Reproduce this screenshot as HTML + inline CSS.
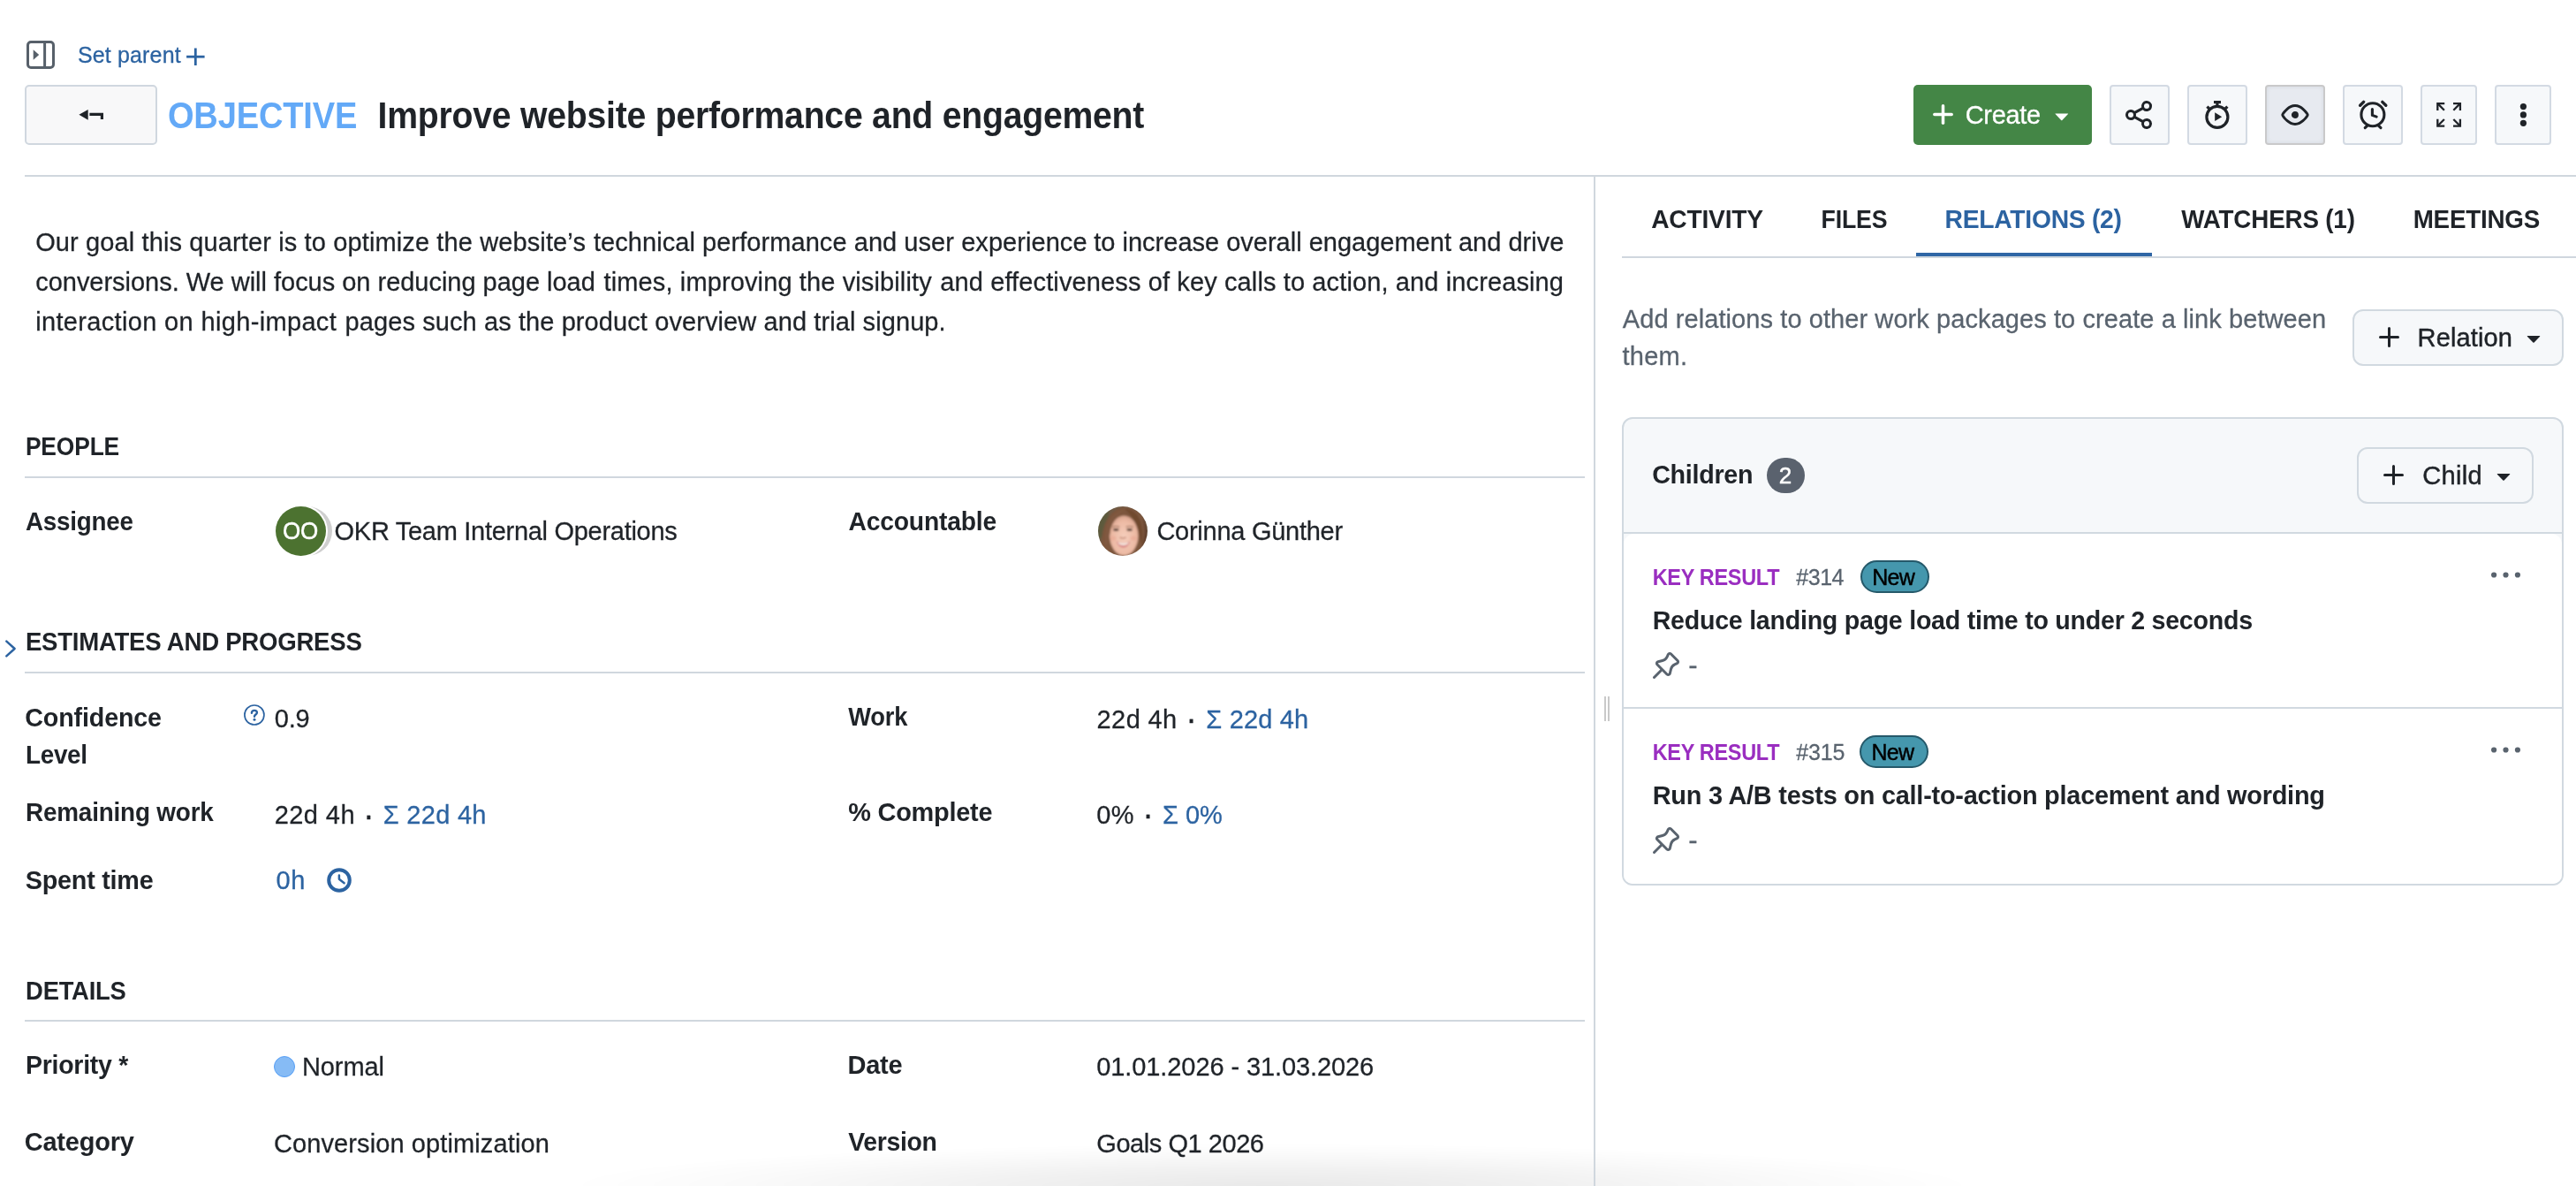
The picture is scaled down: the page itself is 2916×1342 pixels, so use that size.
<!DOCTYPE html><html lang="en"><head><meta charset="utf-8"><title>OBJECTIVE Improve website performance and engagement</title><style>
*{box-sizing:border-box;margin:0;padding:0}
html,body{width:2916px;height:1342px;overflow:hidden;background:#fff}
body{position:relative;font-family:"Liberation Sans",sans-serif;color:#1f2328}
.t{position:absolute;white-space:pre;line-height:1;font-weight:400;margin:0;-webkit-text-stroke:0.28px}
#app{position:absolute;left:0;top:0;width:2916px;height:1342px;will-change:transform}
.abs{position:absolute}
.hl{position:absolute;height:2px;background:#d0d7de}
.vl{position:absolute;width:2px;background:#d0d7de}
.btn{position:absolute;background:#f6f8fa;border:2px solid #d1d9e0;border-radius:12px}
.ibtn{position:absolute;top:96px;height:68px;background:#f6f8fa;border:2px solid #d3dae3;border-radius:4px}
svg{position:absolute;overflow:visible}
</style></head><body><div id="app">
<header>
<svg style="left:30px;top:46px" width="32" height="32" viewBox="0 0 32 32" fill="none" stroke="#57606a" stroke-width="3"><rect x="1.5" y="1.5" width="29" height="29" rx="3.5"/><line x1="20.6" y1="1.5" x2="20.6" y2="30.5"/><path d="M7.7 10.3 L14.2 16 L7.7 21.7 Z" fill="#57606a" stroke="none"/></svg>
<a class="t" style="left:88.0px;top:50px;font-size:25px;color:#2c63a1;letter-spacing:0.14px;">Set parent</a>
<svg style="left:211px;top:53.5px" width="21" height="21" viewBox="0 0 21 21" stroke="#2c63a1" stroke-width="2.8"><line x1="10.3" y1="0.5" x2="10.3" y2="20"/><line x1="0.1" y1="10.2" x2="20.6" y2="10.2"/></svg>
<div class="btn" style="left:28px;top:96px;width:150px;height:68px;background:#f8f8f9;border-color:#d0d7df;border-radius:5px"></div>
<svg style="left:89px;top:123px" width="29" height="14" viewBox="0 0 29 14" fill="#1f2328"><path d="M0.4 6.8 L10.7 0.9 L10.7 12.7 Z"/><path d="M12.4 4.8 H28 V11.9 H24.8 V8 H12.4 Z"/></svg>
<span class="t" style="left:189.9px;top:110.00px;font-size:38.1px;font-weight:700;-webkit-text-stroke:0;color:#63a9f7;letter-spacing:-0.17px;transform:scaleY(1.102);transform-origin:0 0;">OBJECTIVE</span>
<h1 class="t" style="left:427.6px;top:110.00px;font-size:39.2px;font-weight:700;-webkit-text-stroke:0;letter-spacing:-0.24px;transform:scaleY(1.071);transform-origin:0 0;">Improve website performance and engagement</h1>
<div class="abs" style="left:2166px;top:96px;width:202px;height:68px;background:#448646;border-radius:5px"></div>
<svg style="left:2188px;top:118px" width="23" height="23" viewBox="0 0 23 23" stroke="#fff" stroke-width="3.5" stroke-linecap="round"><line x1="11.5" y1="1.8" x2="11.5" y2="21.2"/><line x1="1.8" y1="11.6" x2="21.2" y2="11.6"/></svg>
<span class="t" style="left:2224.7px;top:116px;font-size:29px;color:#ffffff;letter-spacing:-0.32px;-webkit-text-stroke:0.3px #fff;">Create</span>
<svg style="left:2326px;top:127.7px" width="16" height="9" viewBox="0 0 16 9"><path d="M0.9 0.4 H14.7 Q15.6 0.4 15 1.1 L8.4 8 Q7.8 8.6 7.2 8 L0.6 1.1 Q0 0.4 0.9 0.4 Z" fill="#fff"/></svg>
<div class="ibtn" style="left:2388px;width:68px;background:#f6f8fa;border-color:#d3dae3"></div>
<div class="ibtn" style="left:2476px;width:68px;background:#f6f8fa;border-color:#d3dae3"></div>
<div class="ibtn" style="left:2564px;width:68px;background:#e7eaf0;box-shadow:inset 0 0 5px rgba(30,40,60,.09);border-color:#c9c9ca"></div>
<div class="ibtn" style="left:2652px;width:68px;background:#f6f8fa;border-color:#d3dae3"></div>
<div class="ibtn" style="left:2740px;width:64px;background:#f6f8fa;border-color:#d3dae3"></div>
<div class="ibtn" style="left:2824px;width:64px;background:#f6f8fa;border-color:#d3dae3"></div>
<svg style="left:2405.9px;top:114px" width="32" height="32" viewBox="0 0 16 16" fill="#1f2328"><path d="M15 3a3 3 0 0 1-5.175 2.066l-3.92 2.179a2.994 2.994 0 0 1 0 1.51l3.92 2.179a3 3 0 1 1-.73 1.31l-3.92-2.178a3 3 0 1 1 0-4.133l3.92-2.178A3 3 0 1 1 15 3Zm-1.5 10a1.5 1.5 0 1 0-3.001.001A1.5 1.5 0 0 0 13.5 13Zm-9-5a1.5 1.5 0 1 0-3.001.001A1.5 1.5 0 0 0 4.5 8Zm9-5a1.5 1.5 0 1 0-3.001.001A1.5 1.5 0 0 0 13.5 3Z"/></svg><svg style="left:2496px;top:113px" width="28" height="33" viewBox="0 0 28 33" fill="none" stroke="#1f2328" stroke-width="3.2" stroke-linecap="butt"><circle cx="13.9" cy="19.4" r="12"/><line x1="10" y1="2.6" x2="18" y2="2.6"/><line x1="13.9" y1="3" x2="13.9" y2="8"/><line x1="22" y1="11" x2="25.4" y2="7.6"/><line x1="5.8" y1="11" x2="2.4" y2="7.6"/><path d="M11.2 14.3 L19.2 19.2 L11.2 24 Z" fill="#1f2328" stroke="none"/></svg><svg style="left:2582px;top:114.1px" width="32" height="32" viewBox="0 0 16 16" fill="#1f2328"><path d="M8 2c1.981 0 3.671.992 4.933 2.078 1.27 1.091 2.187 2.345 2.637 3.023a1.62 1.62 0 0 1 0 1.798c-.45.678-1.367 1.932-2.637 3.023C11.67 13.008 9.981 14 8 14c-1.981 0-3.671-.992-4.933-2.078C1.797 10.83.88 9.576.43 8.898a1.62 1.62 0 0 1 0-1.798c.45-.677 1.367-1.931 2.637-3.022C4.33 2.992 6.019 2 8 2ZM1.679 7.932a.12.12 0 0 0 0 .136c.411.622 1.241 1.75 2.366 2.717C5.176 11.758 6.527 12.5 8 12.5c1.473 0 2.825-.742 3.955-1.715 1.124-.967 1.954-2.096 2.366-2.717a.12.12 0 0 0 0-.136c-.412-.621-1.242-1.75-2.366-2.717C10.824 4.242 9.473 3.5 8 3.5c-1.473 0-2.825.742-3.955 1.715-1.124.967-1.954 2.096-2.366 2.717ZM8 10a2 2 0 1 1-.001-3.999A2 2 0 0 1 8 10Z"/></svg><svg style="left:2670px;top:113px" width="32" height="33" viewBox="0 0 32 33" fill="none" stroke="#1f2328" stroke-width="3.1" stroke-linecap="round" stroke-linejoin="round"><circle cx="15.9" cy="16.7" r="13"/><path d="M15.4 10.6 V17.4 L20.2 19.1"/><line x1="1.6" y1="6.3" x2="5.6" y2="2.4" stroke-width="3.4"/><line x1="30.8" y1="6.3" x2="26.8" y2="2.4" stroke-width="3.4"/><line x1="9.6" y1="29.3" x2="7.2" y2="31.7"/><line x1="22.6" y1="29.3" x2="25" y2="31.7"/></svg>
<svg style="left:2757px;top:115px" width="30" height="30" viewBox="0 0 30 30" fill="none" stroke="#1f2328" stroke-width="2.3" stroke-linecap="butt" stroke-linejoin="miter"><path d="M2.3 10 V2.1 H10.2"/><path d="M2.6 2.4 L9.9 9.7"/><path d="M20 2.1 H27.9 V10"/><path d="M27.6 2.4 L20.3 9.7"/><path d="M2.3 19.7 V27.6 H10.2"/><path d="M2.6 27.3 L9.9 20"/><path d="M20 27.6 H27.9 V19.7"/><path d="M27.6 27.3 L20.3 20"/></svg>
<svg style="left:2852px;top:117.2px" width="9" height="27" viewBox="0 0 9 27" fill="#1f2328"><circle cx="4.4" cy="3.6" r="3.6"/><circle cx="4.4" cy="12.9" r="3.6"/><circle cx="4.4" cy="22.3" r="3.6"/></svg>

<div class="hl" style="left:28px;top:198px;width:2888px"></div>
</header>
<main>
<p><span class="t" style="left:40.2px;top:260px;font-size:29px;letter-spacing:0.12px;">Our goal this quarter is to optimize the website’s</span> <span class="t" style="left:672.0px;top:260px;font-size:29px;letter-spacing:0.06px;">technical performance and user experience</span> <span class="t" style="left:1238.3px;top:260px;font-size:29px;">to increase overall engagement and drive</span> <span class="t" style="left:40.2px;top:305px;font-size:29px;letter-spacing:-0.02px;">conversions. We will focus on reducing page load</span> <span class="t" style="left:683.6px;top:305px;font-size:29px;letter-spacing:0.12px;">times, improving the visibility</span> <span class="t" style="left:1064.3px;top:305px;font-size:29px;letter-spacing:0.12px;">and effectiveness of key calls to action, and increasing</span> <span class="t" style="left:40.2px;top:350px;font-size:29px;letter-spacing:0.34px;">interaction on high-impact</span> <span class="t" style="left:390.6px;top:350px;font-size:29px;letter-spacing:0.09px;">pages such as the product overview and trial signup.</span></p>
<h2 class="t" style="left:28.9px;top:491.00px;font-size:26.4px;font-weight:700;-webkit-text-stroke:0;letter-spacing:-0.15px;transform:scaleY(1.098);transform-origin:0 0;">PEOPLE</h2>
<div class="hl" style="left:28px;top:539px;width:1766px"></div>
<label class="t" style="left:29.0px;top:576.00px;font-size:27.8px;font-weight:700;-webkit-text-stroke:0;letter-spacing:-0.22px;transform:scaleY(1.043);transform-origin:0 0;">Assignee</label>
<div class="abs" style="left:319px;top:573px;width:56.5px;height:56px;border-radius:50%;background:#cfcfcf"></div>
<div class="abs" style="left:312px;top:573px;width:56.5px;height:56px;border-radius:50%;background:#4c7230;box-shadow:0 0 0 2px #fff"></div>
<span class="t" style="left:319.9px;top:588px;font-size:26px;color:#ffffff;letter-spacing:-0.22px;-webkit-text-stroke:0.5px #fff;transform:scaleY(1.09);transform-origin:0 84%;">OO</span>
<span class="t" style="left:378.6px;top:587px;font-size:29px;letter-spacing:-0.29px;">OKR Team Internal Operations</span>
<label class="t" style="left:960.5px;top:575.00px;font-size:28.3px;font-weight:700;-webkit-text-stroke:0;letter-spacing:-0.21px;transform:scaleY(1.025);transform-origin:0 0;">Accountable</label>
<svg style="left:1243px;top:572.8px" width="56" height="56" viewBox="0 0 56 56"><defs><clipPath id="av"><circle cx="28" cy="28" r="28"/></clipPath><filter id="bl" x="-10%" y="-10%" width="120%" height="120%"><feGaussianBlur stdDeviation="0.9"/></filter><radialGradient id="sk" cx="0.5" cy="0.55" r="0.6"><stop offset="0" stop-color="#f6cfbd"/><stop offset="0.7" stop-color="#ecb9a3"/><stop offset="1" stop-color="#cf9a84"/></radialGradient></defs><g clip-path="url(#av)"><g filter="url(#bl)"><rect x="-4" y="-4" width="64" height="64" fill="#6e5a44"/><rect x="-4" y="-4" width="16" height="40" fill="#5d5a3e"/><path d="M4 60 C2 34 6 6 28 1 C50 0 58 18 55 40 C54 50 50 56 48 60 Z" fill="#7d573e"/><path d="M40 60 C52 50 56 30 50 12 C58 24 58 48 50 60 Z" fill="#5f3d2a"/><ellipse cx="29.3" cy="33" rx="16.3" ry="22.5" fill="url(#sk)"/><path d="M8 46 C6 22 14 6 31 3 C24 8 16.5 16 14 27 C13 33 12.4 41 8 46 Z" fill="#80593f"/><path d="M30 3 C45 3 53 18 50 44 C47.6 40 46.6 31 44.4 24 C41.6 15 36 8 30 3 Z" fill="#70492f"/><ellipse cx="20.3" cy="26.4" rx="3.2" ry="1.3" fill="#4a3328"/><ellipse cx="35.6" cy="26.4" rx="3.2" ry="1.3" fill="#4a3328"/><path d="M16 23.4 Q20 21.6 24.4 23.2 M31.6 23.2 Q36 21.6 40 23.4" stroke="#8a5e48" stroke-width="1" fill="none"/><path d="M24.6 35 Q28 37 31.6 35" stroke="#c58b78" stroke-width="1.6" fill="none"/><path d="M20.5 39.6 Q28.6 43 36.5 39.6 Q34 46.6 28.6 46.8 Q23 46.6 20.5 39.6 Z" fill="#d98585"/><path d="M22 40.4 Q28.6 42.6 35 40.4 Q33.4 43.8 28.6 44 Q23.6 43.8 22 40.4 Z" fill="#f7efe6"/><ellipse cx="17" cy="36" rx="3.6" ry="2.6" fill="#eaa592" opacity="0.55"/><ellipse cx="40" cy="36" rx="3.6" ry="2.6" fill="#eaa592" opacity="0.55"/></g></g></svg>
<span class="t" style="left:1309.4px;top:587px;font-size:29px;letter-spacing:-0.26px;">Corinna Günther</span>
<svg style="left:5px;top:724px" width="14" height="20" viewBox="0 0 14 20" fill="none" stroke="#2c63a1" stroke-width="2.5" stroke-linecap="round" stroke-linejoin="round"><path d="M2.3 1.6 L11.6 10 L2.3 18.4"/></svg>
<h2 class="t" style="left:28.9px;top:711.90px;font-size:27.6px;font-weight:700;-webkit-text-stroke:0;letter-spacing:-0.26px;transform:scaleY(1.051);transform-origin:0 0;">ESTIMATES AND PROGRESS</h2>
<div class="hl" style="left:28px;top:760px;width:1766px"></div>
<label class="t" style="left:28.3px;top:797.50px;font-size:28.7px;font-weight:700;-webkit-text-stroke:0;letter-spacing:-0.16px;transform:scaleY(1.01);transform-origin:0 0;">Confidence</label>
<label class="t" style="left:29.0px;top:839.50px;font-size:27.9px;font-weight:700;-webkit-text-stroke:0;letter-spacing:-0.32px;transform:scaleY(1.039);transform-origin:0 0;">Level</label>
<span class="t" style="left:310.8px;top:799px;font-size:29px;letter-spacing:-0.29px;">0.9</span>
<label class="t" style="left:960.3px;top:797.00px;font-size:27.3px;font-weight:700;-webkit-text-stroke:0;letter-spacing:-0.22px;transform:scaleY(1.062);transform-origin:0 0;">Work</label>
<span class="t" style="left:1241.6px;top:800px;font-size:29px;letter-spacing:0.39px;">22d 4h</span>
<span class="t" style="left:1342.3px;top:795px;font-size:38px;">·</span>
<span class="t" style="left:1365.3px;top:800px;font-size:29px;color:#2c63a1;letter-spacing:0.18px;">Σ 22d 4h</span>
<label class="t" style="left:29.0px;top:905.00px;font-size:27.9px;font-weight:700;-webkit-text-stroke:0;letter-spacing:-0.20px;transform:scaleY(1.039);transform-origin:0 0;">Remaining work</label>
<span class="t" style="left:310.7px;top:908px;font-size:29px;letter-spacing:0.43px;">22d 4h</span>
<span class="t" style="left:411.0px;top:904px;font-size:38px;">·</span>
<span class="t" style="left:433.8px;top:908px;font-size:29px;color:#2c63a1;letter-spacing:0.28px;">Σ 22d 4h</span>
<label class="t" style="left:960.3px;top:905.00px;font-size:28.9px;font-weight:700;-webkit-text-stroke:0;letter-spacing:-0.23px;transform:scaleY(1.003);transform-origin:0 0;">% Complete</label>
<span class="t" style="left:1241.2px;top:908px;font-size:29px;letter-spacing:0.37px;">0%</span>
<span class="t" style="left:1293.3px;top:903px;font-size:38px;">·</span>
<span class="t" style="left:1316.0px;top:908px;font-size:29px;color:#2c63a1;letter-spacing:-0.04px;">Σ 0%</span>
<label class="t" style="left:28.7px;top:982.00px;font-size:28.8px;font-weight:700;-webkit-text-stroke:0;letter-spacing:-0.24px;transform:scaleY(1.007);transform-origin:0 0;">Spent time</label>
<span class="t" style="left:312.5px;top:982px;font-size:29px;color:#2c63a1;letter-spacing:0.57px;">0h</span>
<svg style="left:276px;top:797px" width="24" height="24" viewBox="0 0 24 24" fill="none" stroke="#2c63a1" stroke-width="1.7"><circle cx="11.9" cy="12" r="11"/><path d="M8.9 9.7 C8.9 7.9 10.2 6.9 11.9 6.9 C13.7 6.9 14.9 7.9 14.9 9.4 C14.9 11.5 12 11.6 12 13.8" stroke-width="2.4" stroke-linecap="round"/><circle cx="12" cy="17.2" r="1.5" fill="#2c63a1" stroke="none"/></svg>
<svg style="left:369.5px;top:981.6px" width="28" height="28" viewBox="0 0 28 28" fill="none" stroke="#2c63a1" stroke-linecap="round" stroke-linejoin="round"><circle cx="14" cy="14" r="11.8" stroke-width="4"/><path d="M13.9 8.4 V12.8 L19.6 17.2" stroke-width="2.5"/></svg>
<h2 class="t" style="left:29.1px;top:1107.00px;font-size:27.4px;font-weight:700;-webkit-text-stroke:0;letter-spacing:-0.24px;transform:scaleY(1.058);transform-origin:0 0;">DETAILS</h2>
<div class="hl" style="left:28px;top:1154px;width:1766px"></div>
<div class="abs" style="left:310px;top:1195px;width:24px;height:24px;border-radius:50%;background:#86bbf5;border:1.6px solid #559ef5"></div>
<label class="t" style="left:29.1px;top:1191.00px;font-size:28.5px;font-weight:700;-webkit-text-stroke:0;letter-spacing:-0.29px;transform:scaleY(1.018);transform-origin:0 0;">Priority *</label>
<span class="t" style="left:342.0px;top:1193px;font-size:29px;letter-spacing:-0.10px;">Normal</span>
<label class="t" style="left:959.5px;top:1191px;font-size:29px;font-weight:700;-webkit-text-stroke:0;letter-spacing:-0.24px;">Date</label>
<span class="t" style="left:1241.3px;top:1193px;font-size:29px;letter-spacing:-0.10px;">01.01.2026 - 31.03.2026</span>
<label class="t" style="left:27.7px;top:1278px;font-size:29px;font-weight:700;-webkit-text-stroke:0;letter-spacing:-0.20px;">Category</label>
<span class="t" style="left:309.9px;top:1280px;font-size:29px;letter-spacing:0.11px;">Conversion optimization</span>
<label class="t" style="left:960.3px;top:1277.00px;font-size:28.4px;font-weight:700;-webkit-text-stroke:0;letter-spacing:-0.32px;transform:scaleY(1.021);transform-origin:0 0;">Version</label>
<span class="t" style="left:1241.3px;top:1280px;font-size:29px;letter-spacing:-0.45px;">Goals Q1 2026</span>
<div class="abs" style="left:640px;top:1294px;width:1600px;height:48px;background:radial-gradient(ellipse 50% 100% at 50% 100%,rgba(0,0,0,.085) 0%,rgba(0,0,0,.055) 40%,rgba(0,0,0,.02) 75%,rgba(0,0,0,0) 100%)"></div>
</main>
<div class="vl" style="left:1804px;top:199px;height:1143px"></div>
<div class="abs" style="left:1816.3px;top:788.3px;width:1.8px;height:28px;background:#c9c9c9"></div><div class="abs" style="left:1820.1px;top:788.3px;width:1.8px;height:28px;background:#c9c9c9"></div>
<aside>
<nav><a class="t" style="left:1869.2px;top:232.90px;font-size:28.2px;font-weight:700;-webkit-text-stroke:0;letter-spacing:-0.22px;transform:scaleY(1.046);transform-origin:0 0;">ACTIVITY</a><a class="t" style="left:2061.6px;top:233.90px;font-size:26.7px;font-weight:700;-webkit-text-stroke:0;letter-spacing:-0.18px;transform:scaleY(1.105);transform-origin:0 0;">FILES</a><a class="t" style="left:2201.5px;top:232.90px;font-size:28.3px;font-weight:700;-webkit-text-stroke:0;color:#2c63a1;letter-spacing:-0.28px;transform:scaleY(1.042);transform-origin:0 0;">RELATIONS (2)</a><a class="t" style="left:2469.2px;top:233.90px;font-size:27.8px;font-weight:700;-webkit-text-stroke:0;letter-spacing:-0.18px;transform:scaleY(1.061);transform-origin:0 0;">WATCHERS (1)</a><a class="t" style="left:2731.7px;top:233.90px;font-size:27.8px;font-weight:700;-webkit-text-stroke:0;letter-spacing:-0.23px;transform:scaleY(1.061);transform-origin:0 0;">MEETINGS</a></nav>
<div class="hl" style="left:1836px;top:290px;width:1080px"></div>
<div class="abs" style="left:2169px;top:286px;width:267px;height:4px;background:#2f66a5"></div>
<span class="t" style="left:1836.8px;top:347px;font-size:29px;color:#59636e;letter-spacing:0.08px;">Add relations to other work packages to create a link between</span>
<span class="t" style="left:1836.5px;top:389px;font-size:29px;color:#59636e;letter-spacing:0.26px;">them.</span>
<div class="btn" style="left:2663px;top:350px;width:239px;height:64px"></div>
<svg style="left:2689px;top:366px" width="32" height="32" viewBox="0 0 16 16" fill="#1f2328"><path d="M7.75 2a.75.75 0 0 1 .75.75V7h4.25a.75.75 0 0 1 0 1.5H8.5v4.25a.75.75 0 0 1-1.5 0V8.5H2.75a.75.75 0 0 1 0-1.5H7V2.75A.75.75 0 0 1 7.75 2Z"/></svg>
<span class="t" style="left:2736.6px;top:368px;font-size:29px;letter-spacing:0.12px;-webkit-text-stroke:0.45px currentColor;">Relation</span>
<svg style="left:2852.3px;top:365.8px" width="32" height="32" viewBox="0 0 16 16" fill="#1f2328"><path d="m4.427 7.427 3.396 3.396a.25.25 0 0 0 .354 0l3.396-3.396A.25.25 0 0 0 11.396 7H4.604a.25.25 0 0 0-.177.427Z"/></svg>
<section>
<div class="abs" style="left:1836px;top:472px;width:1066px;height:530px;border:2px solid #d1d9e0;border-radius:12px;background:#f6f8fa"></div>
<div class="hl" style="left:1838px;top:602px;width:1062px;background:#d1d9e0"></div>
<div class="abs" style="left:1838px;top:604px;width:1062px;height:396px;border-radius:12px 12px 10px 10px;background:#fff"></div>
<div class="hl" style="left:1838px;top:800px;width:1062px;background:#d1d9e0"></div>
<h3 class="t" style="left:1870.2px;top:523.20px;font-size:28.7px;font-weight:700;-webkit-text-stroke:0;letter-spacing:-0.29px;transform:scaleY(1.01);transform-origin:0 0;">Children</h3>
<div class="abs" style="left:1999.8px;top:518px;width:43.3px;height:39.8px;border-radius:20px;background:#5a626e"></div>
<span class="t" style="left:2013.7px;top:525px;font-size:26px;color:#ffffff;-webkit-text-stroke:0.5px #fff;">2</span>
<div class="btn" style="left:2668px;top:506px;width:200px;height:64px"></div>
<svg style="left:2694.1px;top:522px" width="32" height="32" viewBox="0 0 16 16" fill="#1f2328"><path d="M7.75 2a.75.75 0 0 1 .75.75V7h4.25a.75.75 0 0 1 0 1.5H8.5v4.25a.75.75 0 0 1-1.5 0V8.5H2.75a.75.75 0 0 1 0-1.5H7V2.75A.75.75 0 0 1 7.75 2Z"/></svg>
<span class="t" style="left:2742.3px;top:524px;font-size:29px;letter-spacing:0.34px;-webkit-text-stroke:0.45px currentColor;">Child</span>
<svg style="left:2818.1px;top:521.8px" width="32" height="32" viewBox="0 0 16 16" fill="#1f2328"><path d="m4.427 7.427 3.396 3.396a.25.25 0 0 0 .354 0l3.396-3.396A.25.25 0 0 0 11.396 7H4.604a.25.25 0 0 0-.177.427Z"/></svg>
<article>
<span class="t" style="left:1870.7px;top:642.00px;font-size:23.5px;font-weight:700;-webkit-text-stroke:0;color:#9a2ec0;letter-spacing:-0.32px;transform:scaleY(1.064);transform-origin:0 0;">KEY RESULT</span>
<span class="t" style="left:2033.3px;top:641px;font-size:25px;color:#59636e;letter-spacing:-0.47px;">#314</span>
<div class="abs" style="left:2106px;top:634px;width:78px;height:37px;border-radius:18.5px;background:#4597ad;border:2px solid #25596a"></div>
<span class="t" style="left:2119.3px;top:641px;font-size:25px;color:#000000;letter-spacing:-0.78px;-webkit-text-stroke:0.45px currentColor;">New</span>
<h4 class="t" style="left:1870.7px;top:687.50px;font-size:28.6px;font-weight:700;-webkit-text-stroke:0;letter-spacing:-0.25px;transform:scaleY(1.014);transform-origin:0 0;">Reduce landing page load time to under 2 seconds</h4>
<svg style="left:2819.6px;top:635.2px" width="33" height="33" viewBox="0 0 16 16" fill="#59636e"><path d="M8 9a1.5 1.5 0 1 0 0-3 1.5 1.5 0 0 0 0 3ZM1.5 9a1.5 1.5 0 1 0 0-3 1.5 1.5 0 0 0 0 3Zm13 0a1.5 1.5 0 1 0 0-3 1.5 1.5 0 0 0 0 3Z"/></svg>
<svg style="left:1870px;top:737px" width="32" height="32" viewBox="0 0 16 16" fill="#59636e"><path d="m11.294.984 3.722 3.722a1.75 1.75 0 0 1-.504 2.826l-1.327.613a3.089 3.089 0 0 0-1.707 2.084l-.584 2.454c-.317 1.332-1.972 1.8-2.94.832L5.75 11.311 1.78 15.28a.749.749 0 1 1-1.06-1.06l3.969-3.97-2.204-2.204c-.968-.968-.5-2.623.832-2.94l2.454-.584a3.08 3.08 0 0 0 2.084-1.707l.613-1.327a1.75 1.75 0 0 1 2.826-.504ZM6.283 9.723l2.732 2.731a.25.25 0 0 0 .42-.119l.584-2.454a4.586 4.586 0 0 1 2.537-3.098l1.328-.613a.25.25 0 0 0 .072-.404l-3.722-3.722a.25.25 0 0 0-.404.072l-.613 1.328a4.584 4.584 0 0 1-3.098 2.537l-2.454.584a.25.25 0 0 0-.119.42l2.731 2.732Z"/></svg>
<span class="t" style="left:1911.2px;top:737px;font-size:31px;color:#59636e;">-</span>
</article>
<article>
<span class="t" style="left:1870.7px;top:840.00px;font-size:23.5px;font-weight:700;-webkit-text-stroke:0;color:#9a2ec0;letter-spacing:-0.32px;transform:scaleY(1.064);transform-origin:0 0;">KEY RESULT</span>
<span class="t" style="left:2033.3px;top:839px;font-size:25px;color:#59636e;letter-spacing:-0.14px;">#315</span>
<div class="abs" style="left:2105.2px;top:832px;width:78px;height:37px;border-radius:18.5px;background:#4597ad;border:2px solid #25596a"></div>
<span class="t" style="left:2118.5px;top:839px;font-size:25px;color:#000000;letter-spacing:-0.78px;-webkit-text-stroke:0.45px currentColor;">New</span>
<h4 class="t" style="left:1870.7px;top:885.50px;font-size:28.9px;font-weight:700;-webkit-text-stroke:0;letter-spacing:-0.24px;transform:scaleY(1.003);transform-origin:0 0;">Run 3 A/B tests on call-to-action placement and wording</h4>
<svg style="left:2819.6px;top:833.2px" width="33" height="33" viewBox="0 0 16 16" fill="#59636e"><path d="M8 9a1.5 1.5 0 1 0 0-3 1.5 1.5 0 0 0 0 3ZM1.5 9a1.5 1.5 0 1 0 0-3 1.5 1.5 0 0 0 0 3Zm13 0a1.5 1.5 0 1 0 0-3 1.5 1.5 0 0 0 0 3Z"/></svg>
<svg style="left:1870px;top:935px" width="32" height="32" viewBox="0 0 16 16" fill="#59636e"><path d="m11.294.984 3.722 3.722a1.75 1.75 0 0 1-.504 2.826l-1.327.613a3.089 3.089 0 0 0-1.707 2.084l-.584 2.454c-.317 1.332-1.972 1.8-2.94.832L5.75 11.311 1.78 15.28a.749.749 0 1 1-1.06-1.06l3.969-3.97-2.204-2.204c-.968-.968-.5-2.623.832-2.94l2.454-.584a3.08 3.08 0 0 0 2.084-1.707l.613-1.327a1.75 1.75 0 0 1 2.826-.504ZM6.283 9.723l2.732 2.731a.25.25 0 0 0 .42-.119l.584-2.454a4.586 4.586 0 0 1 2.537-3.098l1.328-.613a.25.25 0 0 0 .072-.404l-3.722-3.722a.25.25 0 0 0-.404.072l-.613 1.328a4.584 4.584 0 0 1-3.098 2.537l-2.454.584a.25.25 0 0 0-.119.42l2.731 2.732Z"/></svg>
<span class="t" style="left:1911.2px;top:935px;font-size:31px;color:#59636e;">-</span>
</article>
</section>
</aside>
</div></body></html>
